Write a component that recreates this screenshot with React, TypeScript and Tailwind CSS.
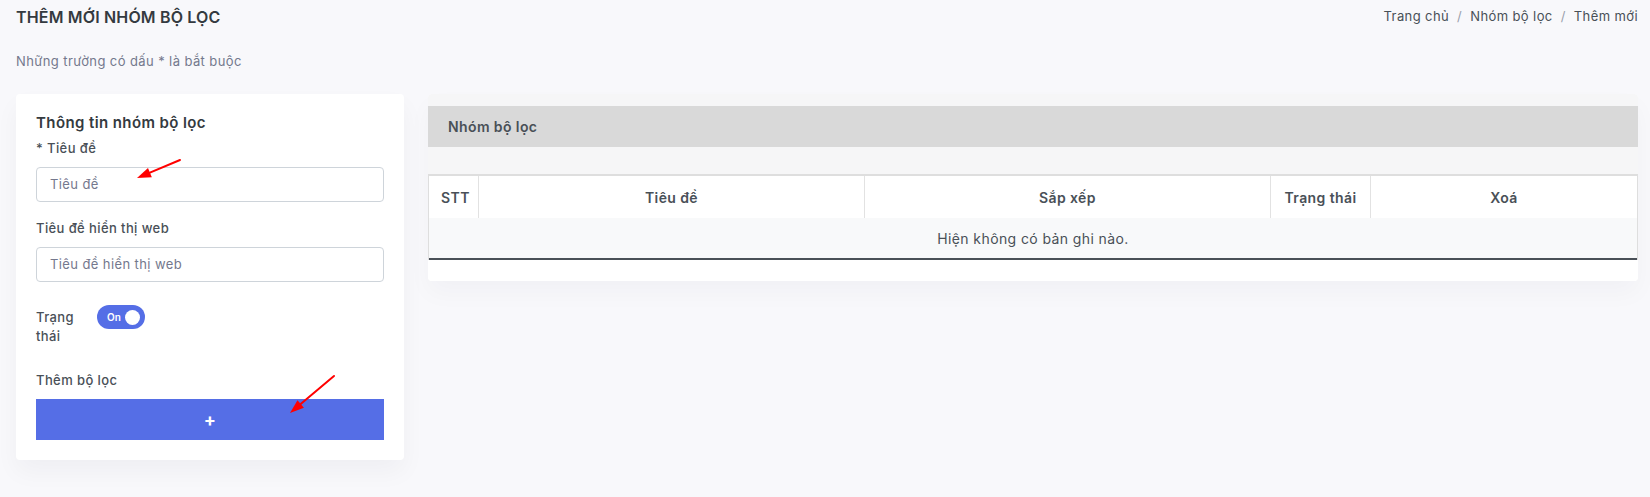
import React from "react";

const font = { fontFamily: "Inter, 'Noto Sans', sans-serif" };

function Arrow({ x1, y1, x2, y2 }: { x1: number; y1: number; x2: number; y2: number }) {
  const ang = Math.atan2(y2 - y1, x2 - x1);
  const len = 14;
  const w = 5;
  const bx = x2 - len * Math.cos(ang);
  const by = y2 - len * Math.sin(ang);
  const px = -Math.sin(ang) * w;
  const py = Math.cos(ang) * w;
  return (
    <g>
      <line x1={x1} y1={y1} x2={bx} y2={by} stroke="#f00" strokeWidth={2} strokeLinecap="round" />
      <polygon points={`${x2},${y2} ${bx + px},${by + py} ${bx - px},${by - py}`} fill="#f00" />
    </g>
  );
}

export default function App() {
  return (
    <div className="relative min-h-[497px] w-full bg-[#f8f8fb] tracking-[0.025em] text-[#495057]" style={font}>
      <div className="flex h-[34px] items-center justify-between pl-4 pr-3">
        <h4 className="text-[16px] font-semibold uppercase tracking-[0.01em] text-[#343a40]">Thêm mới nhóm bộ lọc</h4>
        <div className="flex items-center text-[13px] text-[#495057]">
          <span>Trang chủ</span>
          <span className="px-2 text-[#9aa0ac]">/</span>
          <span>Nhóm bộ lọc</span>
          <span className="px-2 text-[#9aa0ac]">/</span>
          <span>Thêm mới</span>
        </div>
      </div>
      <div className="mt-[17px] pl-4 text-[13px] leading-[20px] text-[#74788d]">Những trường có dấu * là bắt buộc</div>

      <div className="mt-[23px] flex items-start gap-6 pl-4 pr-3">
        <div className="w-[388px] shrink-0 rounded-[4px] bg-white px-5 pb-5 pt-[18px] shadow-[0_12px_24px_rgba(18,38,63,0.04)]">
          <div className="text-[15px] font-semibold leading-[22px] text-[#343a40]">Thông tin nhóm bộ lọc</div>
          <div className="mt-[4px] text-[13px] font-medium leading-[20px]">* Tiêu đề</div>
          <div className="mt-[9px] flex h-[35px] items-center rounded-[4px] border border-[#ced4da] px-[13px] text-[13px] text-[#74788d]">Tiêu đề</div>
          <div className="mt-[16px] text-[13px] font-medium leading-[20px]">Tiêu đề hiển thị web</div>
          <div className="mt-[9px] flex h-[35px] items-center rounded-[4px] border border-[#ced4da] px-[13px] text-[13px] text-[#74788d]">Tiêu đề hiển thị web</div>
          <div className="mt-[23px] flex items-start">
            <div className="w-[61px] pt-[3px] text-[13px] font-medium leading-[19px]">Trạng thái</div>
            <div className="flex h-[24px] w-[48px] items-center justify-between rounded-full bg-[#556ee6] pl-[10px] pr-[5px]">
              <span className="text-[10px] font-semibold tracking-normal text-white">On</span>
              <span className="h-[15px] w-[15px] rounded-full bg-white" />
            </div>
          </div>
          <div className="mt-[24px] text-[13px] font-medium leading-[20px]">Thêm bộ lọc</div>
          <div className="mt-[9px] flex h-[41px] items-center justify-center bg-[#556ee6] text-[18px] font-bold text-white">+</div>
        </div>

        <div className="flex-1 overflow-hidden rounded-[4px] bg-white shadow-[0_12px_24px_rgba(18,38,63,0.03)]">
          <div className="bg-[#f6f6f7] pt-3">
            <div className="flex h-[41px] items-center bg-[#d9d9d9] pl-5 text-[14px] font-semibold text-[#495057]">Nhóm bộ lọc</div>
            <div className="h-[27px]" />
            <div className="border-x border-t-2 border-[#dedede]">
              <div className="grid grid-cols-[50px_386px_406px_100px_1fr] bg-white text-[14px] font-semibold text-[#495057]">
                <div className="flex h-[42px] items-center border-r border-[#e2e2e2] pl-3">STT</div>
                <div className="flex h-[42px] items-center justify-center border-r border-[#e2e2e2]">Tiêu đề</div>
                <div className="flex h-[42px] items-center justify-center border-r border-[#e2e2e2]">Sắp xếp</div>
                <div className="flex h-[42px] items-center justify-center border-r border-[#e2e2e2]">Trạng thái</div>
                <div className="flex h-[42px] items-center justify-center">Xoá</div>
              </div>
              <div className="flex h-[42px] items-center justify-center border-b-2 border-[#495057] bg-[#f8f9fa] text-[14px] text-[#495057]">
                Hiện không có bản ghi nào.
              </div>
            </div>
          </div>
          <div className="h-[21px] bg-white" />
        </div>
      </div>

      <svg className="pointer-events-none absolute left-0 top-0" width="1650" height="497">
        <Arrow x1={180} y1={160} x2={137} y2={178} />
        <Arrow x1={334} y1={376} x2={290} y2={413} />
      </svg>
    </div>
  );
}
